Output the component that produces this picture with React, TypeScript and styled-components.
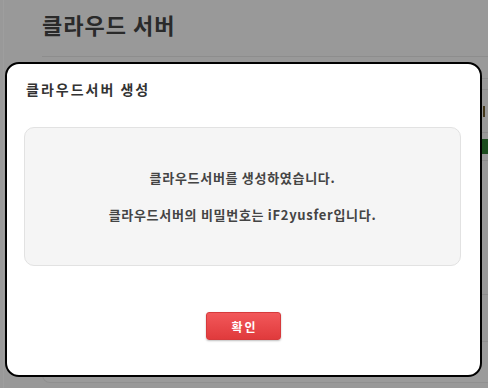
import styled, { createGlobalStyle } from "styled-components";

const GlobalStyle = createGlobalStyle`
    html, body {
        margin: 0;
        padding: 0;
        width: 488px;
        height: 388px;
        overflow: hidden;
        background: #f7f7f7;
        font-family: "Noto Sans CJK KR", "Noto Sans", sans-serif;
    }
`;

// rows of the table behind the dialog; only the right edge peeks out
const rows = [
    { h: 21, mark: "none" },
    { h: 10, mark: "none" },
    { h: 42, mark: "tick" },
    { h: 27, mark: "badge" },
    { h: 133, mark: "none" },
];

export default function App() {
    return (
        <>
            <GlobalStyle />
            <Page>
                <Main>
                    <PageTitle>클라우드 서버</PageTitle>
                    <Table>
                        {rows.map((r, i) => (
                            <Row key={i} $h={r.h}>
                                <Cell />
                                <EdgeCell>
                                    {r.mark === "badge" && <Badge />}
                                    {r.mark === "tick" && <Tick />}
                                </EdgeCell>
                            </Row>
                        ))}
                    </Table>
                    <FooterPanel />
                </Main>
            </Page>
            <Overlay />
            <Modal role="dialog">
                <ModalHeader>클라우드서버 생성</ModalHeader>
                <InfoBox>
                    <Message>클라우드서버를 생성하였습니다.</Message>
                    <Message>클라우드서버의 비밀번호는 iF2yusfer입니다.</Message>
                </InfoBox>
                <Actions>
                    <ConfirmButton>확인</ConfirmButton>
                </Actions>
            </Modal>
        </>
    );
}

const Page = styled.div`
    display: flex;
    height: 388px;
    padding-left: 3px;
    box-sizing: border-box;
`;

const Main = styled.main`
    flex: 1;
    min-width: 0;
    border-left: 1px solid #ffffff;
    padding: 8px 0 0 38px;
    display: flex;
    flex-direction: column;
`;

const PageTitle = styled.h1`
    margin: 0;
    height: 48px;
    font-size: 22px;
    font-weight: 700;
    letter-spacing: 1px;
    line-height: 33px;
    color: #444;
`;

const Table = styled.div`
    border-top: 1px solid #e4e4e4;
`;

const Row = styled.div<{ $h: number }>`
    display: flex;
    height: ${(p) => p.$h}px;
    border-bottom: 1px solid #e4e4e4;
`;

const Cell = styled.div`
    flex: 1;
`;

const EdgeCell = styled.div`
    width: 6px;
    display: flex;
    align-items: center;
`;

const Badge = styled.span`
    width: 6px;
    height: 15px;
    background: #2e7d32;
`;

const Tick = styled.span`
    width: 2px;
    height: 11px;
    margin-left: 1px;
    background: #6b5a2a;
`;

const FooterPanel = styled.div`
    margin-top: 46px;
    height: 40px;
    border: 1px solid #e8e8e8;
    border-right: none;
    border-radius: 8px 0 0 8px;
    background: #fbfbfb;
`;

const Overlay = styled.div`
    position: fixed;
    inset: 0;
    background: rgba(0, 0, 0, 0.38);
`;

const Modal = styled.div`
    position: fixed;
    left: 5px;
    top: 62px;
    width: 477px;
    height: 315px;
    box-sizing: border-box;
    border: 2px solid #000;
    border-radius: 14px;
    background: #fff;
    display: flex;
    flex-direction: column;
`;

const ModalHeader = styled.h2`
    margin: 15px 0 0 19px;
    height: 20px;
    font-size: 14px;
    font-weight: 700;
    letter-spacing: 2px;
    line-height: 20px;
    color: #333;
`;

const InfoBox = styled.div`
    margin: 28px 19px 0 17px;
    height: 139px;
    box-sizing: border-box;
    border: 1px solid #e2e2e2;
    border-radius: 10px;
    background: #f5f5f5;
    display: flex;
    flex-direction: column;
    align-items: center;
    justify-content: center;
    gap: 19px;
`;

const Message = styled.p`
    margin: 0;
    font-size: 13px;
    font-weight: 700;
    letter-spacing: 0.7px;
    line-height: 18px;
    color: #444;
`;

const Actions = styled.div`
    display: flex;
    justify-content: center;
    margin-top: 46px;
`;

const ConfirmButton = styled.button`
    width: 75px;
    height: 28px;
    box-sizing: border-box;
    border: 1px solid #d63a3c;
    border-radius: 3px;
    background: linear-gradient(#f2585a, #e03a3c);
    box-shadow: 0 1px 2px rgba(0, 0, 0, 0.25);
    color: #fff;
    font-family: inherit;
    font-size: 12px;
    font-weight: 700;
    letter-spacing: 2px;
    padding: 0 0 0 2px;
    cursor: pointer;
`;
